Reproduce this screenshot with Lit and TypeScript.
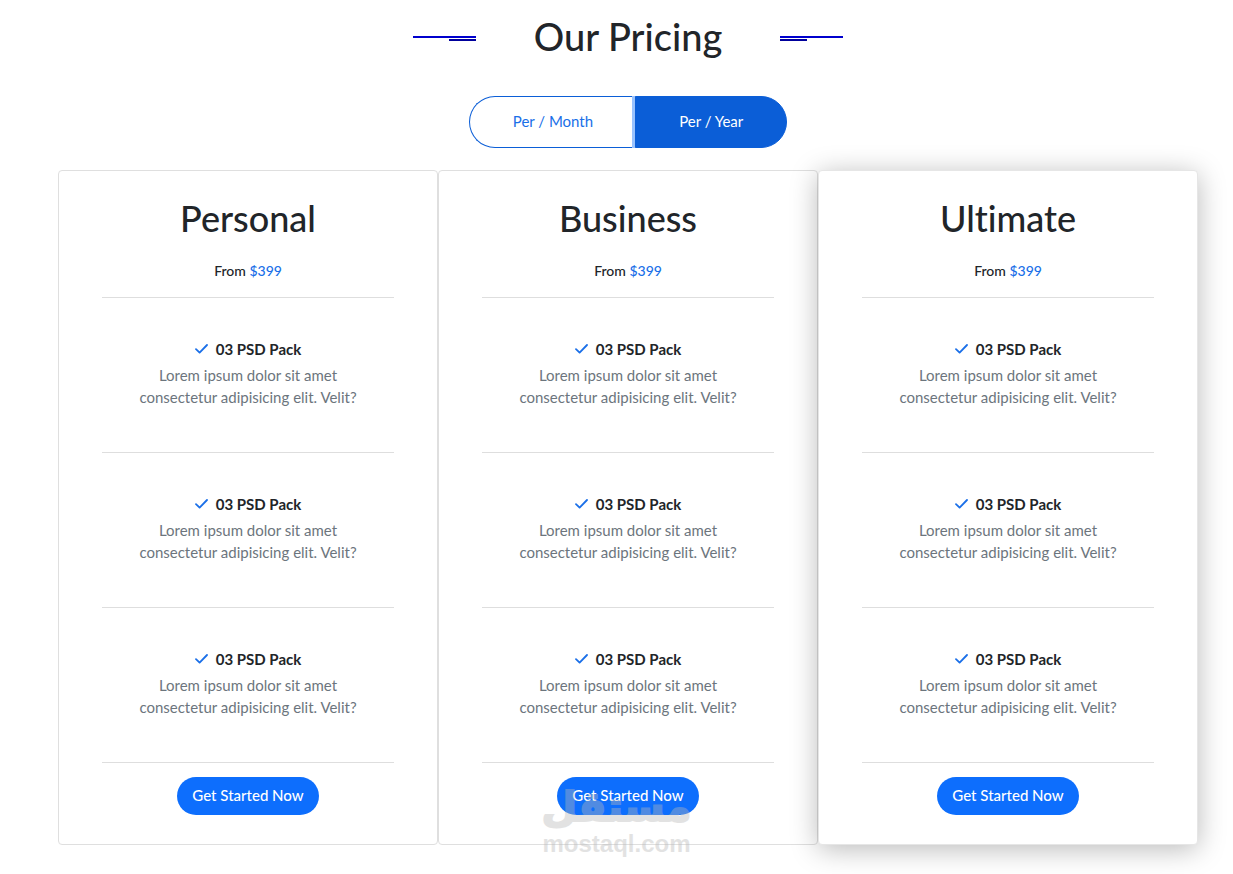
import { LitElement, html, css } from "lit";
import { customElement, property, state } from "lit/decorators.js";

const features = [
  { title: "03 PSD Pack", text: "Lorem ipsum dolor sit amet consectetur adipisicing elit. Velit?" },
  { title: "03 PSD Pack", text: "Lorem ipsum dolor sit amet consectetur adipisicing elit. Velit?" },
  { title: "03 PSD Pack", text: "Lorem ipsum dolor sit amet consectetur adipisicing elit. Velit?" },
];

@customElement("price-card")
export class PriceCard extends LitElement {
  @property() name = "";
  @property() price = "";

  static styles = css`
    :host {
      display: block;
      box-sizing: border-box;
      padding: 22px 43px 29px;
      border: 1px solid #dfdfdf;
      border-radius: 4px;
      background: #fff;
      text-align: center;
    }
    .name {
      margin: 0;
      font-size: 36px;
      line-height: 50px;
      font-weight: 500;
    }
    .price {
      margin: 16px 0 14px;
      font-size: 14px;
      line-height: 24px;
      font-weight: 500;
    }
    .amount {
      color: #1a6fe8;
    }
    .features {
      margin: 0;
      padding: 0;
      list-style: none;
      border-top: 1px solid #dedede;
    }
    .feature {
      padding: 39px 32px 44px;
      border-bottom: 1px solid #dedede;
    }
    .title {
      display: flex;
      justify-content: center;
      align-items: center;
      gap: 8px;
      margin: 0 0 3px;
      font-size: 15px;
      line-height: 24px;
      font-weight: 700;
    }
    .text {
      margin: 0;
      color: #6c757d;
      font-size: 15px;
      line-height: 22px;
    }
    .start {
      margin-top: 14px;
      height: 38px;
      padding: 0 15px 2px;
      border: 0;
      border-radius: 19px;
      background: #0d6efd;
      color: #fff;
      font: inherit;
      font-size: 15px;
      font-weight: 500;
      cursor: pointer;
    }
  `;

  render() {
    return html`
      <h2 class="name">${this.name}</h2>
      <p class="price">From <span class="amount">${this.price}</span></p>
      <ul class="features">
        ${features.map(
          (f) => html`<li class="feature">
            <h3 class="title">
              <svg width="13" height="12" viewBox="0 0 13 12" fill="none" aria-hidden="true">
                <path d="M1 6.2 4.6 9.6 12 2" stroke="#1a6fe8" stroke-width="1.8" stroke-linecap="round" stroke-linejoin="round" />
              </svg>
              ${f.title}
            </h3>
            <p class="text">${f.text}</p>
          </li>`
        )}
      </ul>
      <button class="start" type="button">Get Started Now</button>
    `;
  }
}

@customElement("app-root")
export class AppRoot extends LitElement {
  @state() period = "year";

  static styles = css`
    :host {
      display: block;
      position: relative;
      padding: 8px 35px 29px 58px;
      background: #fff;
      color: #212529;
      font-family: Lato, sans-serif;
      font-variant-ligatures: none;
    }
    .heading {
      display: flex;
      justify-content: center;
      align-items: center;
      gap: 58px;
    }
    .heading h1 {
      margin: 0;
      font-size: 38px;
      line-height: 56px;
      font-weight: 500;
    }
    .rule {
      margin-top: 6px;
    }
    .toggle {
      display: flex;
      justify-content: center;
      margin: 32px 0 22px;
    }
    .option {
      box-sizing: border-box;
      height: 52px;
      padding: 0 43px 2px;
      border: 1px solid #0b5ed7;
      background: #fff;
      color: #1a6fe8;
      font: inherit;
      font-size: 15px;
      cursor: pointer;
    }
    .month {
      padding-right: 42px;
      border-right: 0;
      border-radius: 26px 0 0 26px;
    }
    .year {
      border-radius: 0 26px 26px 0;
      box-shadow: -3px 0 0 #9ac3fe;
    }
    .selected {
      background: #0b5ed7;
      color: #fff;
    }
    .cards {
      display: grid;
      grid-template-columns: repeat(3, 1fr);
    }
    .raised {
      border-color: #e6e6e6;
      box-shadow: 0 4px 28px rgba(0, 0, 0, 0.28);
    }
    .watermark {
      position: absolute;
      bottom: 16px;
      left: 0;
      right: 0;
      display: flex;
      flex-direction: column;
      align-items: center;
      color: #b8b8b8;
      opacity: 0.4;
      font-weight: 700;
      pointer-events: none;
    }
    .arabic {
      font-family: "DejaVu Sans", sans-serif;
      font-size: 41px;
      line-height: 46px;
      -webkit-text-stroke: 2px #b8b8b8;
    }
    .latin {
      font-family: "Liberation Sans", sans-serif;
      font-size: 24px;
      line-height: 28px;
    }
  `;

  render() {
    return html`
      <header class="heading">
        <svg class="rule" width="63" height="6" viewBox="0 0 63 6" aria-hidden="true">
          <path d="M0 0H63V2H0Z" fill="#0000cd" />
          <path d="M36 3H63V5H36Z" fill="#00009c" />
        </svg>
        <h1>Our Pricing</h1>
        <svg class="rule" width="63" height="6" viewBox="0 0 63 6" aria-hidden="true">
          <path d="M0 0H63V2H0Z" fill="#0000cd" />
          <path d="M0 3H27V5H0Z" fill="#00009c" />
        </svg>
      </header>
      <div class="toggle" role="group" aria-label="Billing period">
        <button
          type="button"
          class="option month ${this.period === "month" ? "selected" : ""}"
          aria-pressed=${this.period === "month"}
          @click=${() => (this.period = "month")}
        >Per / Month</button>
        <button
          type="button"
          class="option year ${this.period === "year" ? "selected" : ""}"
          aria-pressed=${this.period === "year"}
          @click=${() => (this.period = "year")}
        >Per / Year</button>
      </div>
      <main class="cards">
        <price-card name="Personal" price="$399"></price-card>
        <price-card name="Business" price="$399"></price-card>
        <price-card class="raised" name="Ultimate" price="$399"></price-card>
      </main>
      <div class="watermark">
        <span class="arabic" lang="ar" dir="rtl">مستقل</span>
        <span class="latin">mostaql.com</span>
      </div>
    `;
  }
}
